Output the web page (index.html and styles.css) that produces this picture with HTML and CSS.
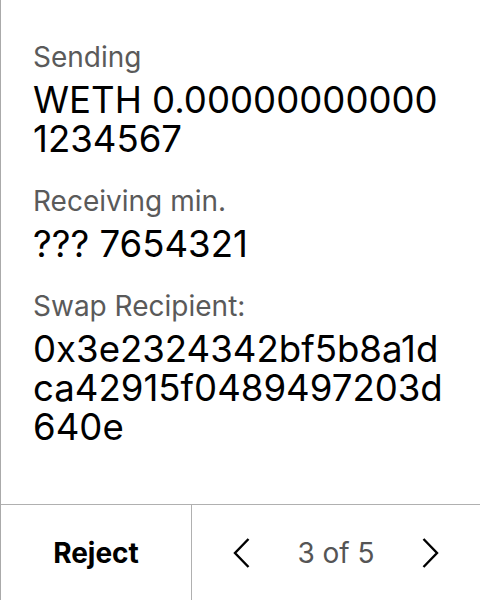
FILE: index.html
```html
<!DOCTYPE html>
<html>
<head>
<meta charset="utf-8">
<link rel="stylesheet" href="styles.css">
</head>
<body>
<div class="screen">
  <div class="content">
    <div class="field">
      <div class="label">Sending</div>
      <div class="value">WETH 0.00000000000 1234567</div>
    </div>
    <div class="field">
      <div class="label">Receiving min.</div>
      <div class="value">??? 7654321</div>
    </div>
    <div class="field">
      <div class="label">Swap Recipient:</div>
      <div class="value break">0x3e2324342bf5b8a1dca42915f0489497203d640e</div>
    </div>
  </div>
  <div class="footer">
    <div class="reject">Reject</div>
    <div class="pager">
      <svg class="chev" width="17" height="30" viewBox="0 0 17 30"><polyline points="15.5,1 2,15 15.5,29" fill="none" stroke="#000" stroke-width="2.4"/></svg>
      <span class="count">3 of 5</span>
      <svg class="chev" width="17" height="30" viewBox="0 0 17 30"><polyline points="1.5,1 15,15 1.5,29" fill="none" stroke="#000" stroke-width="2.4"/></svg>
    </div>
  </div>
</div>
</body>
</html>
```
FILE: styles.css
```css
html, body {
  margin: 0;
  padding: 0;
  background: #fff;
}
body {
  font-family: Inter, "Noto Sans", sans-serif;
  color: #000;
}
.screen {
  width: 480px;
  height: 600px;
  box-sizing: border-box;
  border-left: 1px solid #aaa;
  display: flex;
  flex-direction: column;
}
.content {
  flex: 1;
  padding: 40px 31px 0 32px;
  display: flex;
  flex-direction: column;
  gap: 25px;
}
.label {
  font-size: 28px;
  line-height: 34px;
  color: #5a5a5a;
}
.value {
  font-size: 36.6px;
  line-height: 39px;
  margin-top: 7px;
}
.break {
  word-break: break-all;
}
.footer {
  box-sizing: border-box;
  height: 96px;
  border-top: 1px solid #b0b0b0;
  display: grid;
  grid-template-columns: 191px 1fr;
}
.reject {
  border-right: 1px solid #b0b0b0;
  display: flex;
  align-items: center;
  justify-content: center;
  font-size: 28px;
  font-weight: 700;
}
.pager {
  display: flex;
  align-items: center;
  justify-content: center;
  gap: 47px;
}
.count {
  font-size: 28px;
  color: #555;
}
```
